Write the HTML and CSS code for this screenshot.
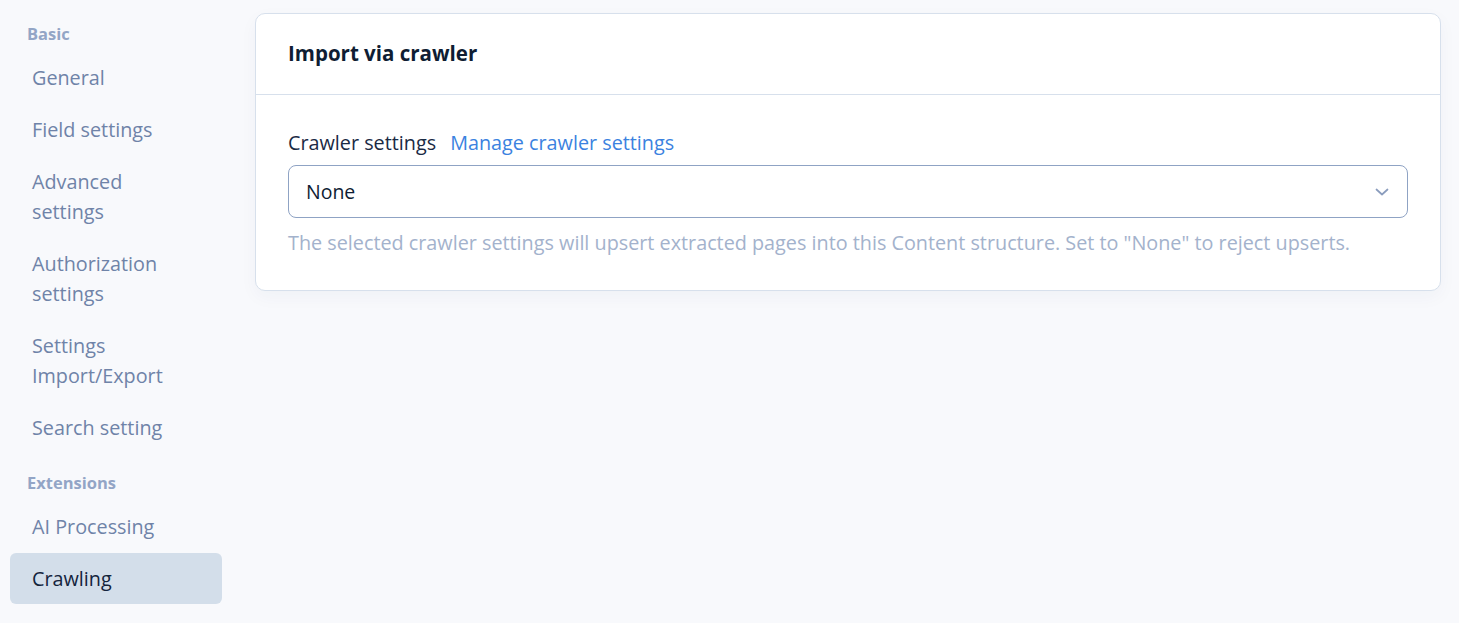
FILE: index.html
```html
<!DOCTYPE html>
<html lang="en">
<head>
<meta charset="utf-8">
<title>Crawling settings</title>
<link rel="stylesheet" href="styles.css">
</head>
<body>
<div class="layout">
  <nav class="sidebar">
    <div class="nav-heading">Basic</div>
    <a class="nav-item">General</a>
    <a class="nav-item">Field settings</a>
    <a class="nav-item">Advanced<br>settings</a>
    <a class="nav-item">Authorization<br>settings</a>
    <a class="nav-item">Settings<br>Import/Export</a>
    <a class="nav-item">Search setting</a>
    <div class="nav-heading">Extensions</div>
    <a class="nav-item">AI Processing</a>
    <a class="nav-item active">Crawling</a>
  </nav>
  <main class="main">
    <section class="card">
      <header class="card-header">
        <h2 class="card-title">Import via crawler</h2>
      </header>
      <div class="card-body">
        <div class="field-label">
          <span class="label-text">Crawler settings</span>
          <a class="label-link">Manage crawler settings</a>
        </div>
        <div class="select">
          <span class="select-value">None</span>
          <svg class="chevron" width="14" height="8" viewBox="0 0 14 8" fill="none">
            <path d="M1.5 1.5 L7 6.5 L12.5 1.5" stroke="#8a9cbd" stroke-width="1.7" stroke-linecap="round" stroke-linejoin="round"/>
          </svg>
        </div>
        <p class="help">The selected crawler settings will upsert extracted pages into this Content structure. Set to "None" to reject upserts.</p>
      </div>
    </section>
  </main>
</div>
</body>
</html>
```
FILE: styles.css
```css
* { box-sizing: border-box; }
html, body {
  margin: 0;
  padding: 0;
  background: #f8f9fc;
  font-family: "Open Sans", "Noto Sans", sans-serif;
  color: #1a2a44;
}
.layout {
  display: flex;
  align-items: flex-start;
  padding: 5px 18px 0 10px;
  gap: 33px;
}
.sidebar {
  width: 212px;
  flex-shrink: 0;
  display: flex;
  flex-direction: column;
  gap: 1px;
}
.nav-heading {
  font-size: 16.5px;
  font-weight: 700;
  color: #93a5c6;
  line-height: 18px;
  padding: 20px 17px 8px;
}
.nav-item {
  display: block;
  font-size: 19.8px;
  line-height: 30px;
  padding: 10.5px 22px 10.5px;
  color: #6f83a8;
  border-radius: 6px;
}
.nav-item.active {
  background: #d3deea;
  color: #14243d;
}
.main {
  flex: 1;
  padding-top: 8px;
}
.card {
  background: #fff;
  border: 1px solid #d7e0ec;
  border-radius: 10px;
  box-shadow: 0 6px 18px rgba(30, 50, 90, 0.04);
}
.card-header {
  height: 81px;
  display: flex;
  align-items: center;
  padding: 0 32px 3px;
  border-bottom: 1px solid #d7e0ec;
}
.card-title {
  margin: 0;
  font-size: 20.5px;
  font-weight: 700;
  color: #0f1d33;
}
.card-body {
  padding: 35px 32px 36px 32px;
}
.field-label {
  display: flex;
  align-items: center;
  gap: 14px;
  font-size: 19.8px;
  line-height: 26px;
}
.label-text { color: #1a2a44; }
.label-link { color: #3b82e0; }
.select {
  margin-top: 9px;
  height: 53px;
  border: 1px solid #8fa3c4;
  border-radius: 8px;
  display: flex;
  align-items: center;
  justify-content: space-between;
  padding: 0 18px 0 17px;
}
.select-value {
  font-size: 19.5px;
  color: #0f1d33;
}
.help {
  margin: 14px 0 0;
  font-size: 19.8px;
  line-height: 22px;
  color: #a3b2cc;
}
```
